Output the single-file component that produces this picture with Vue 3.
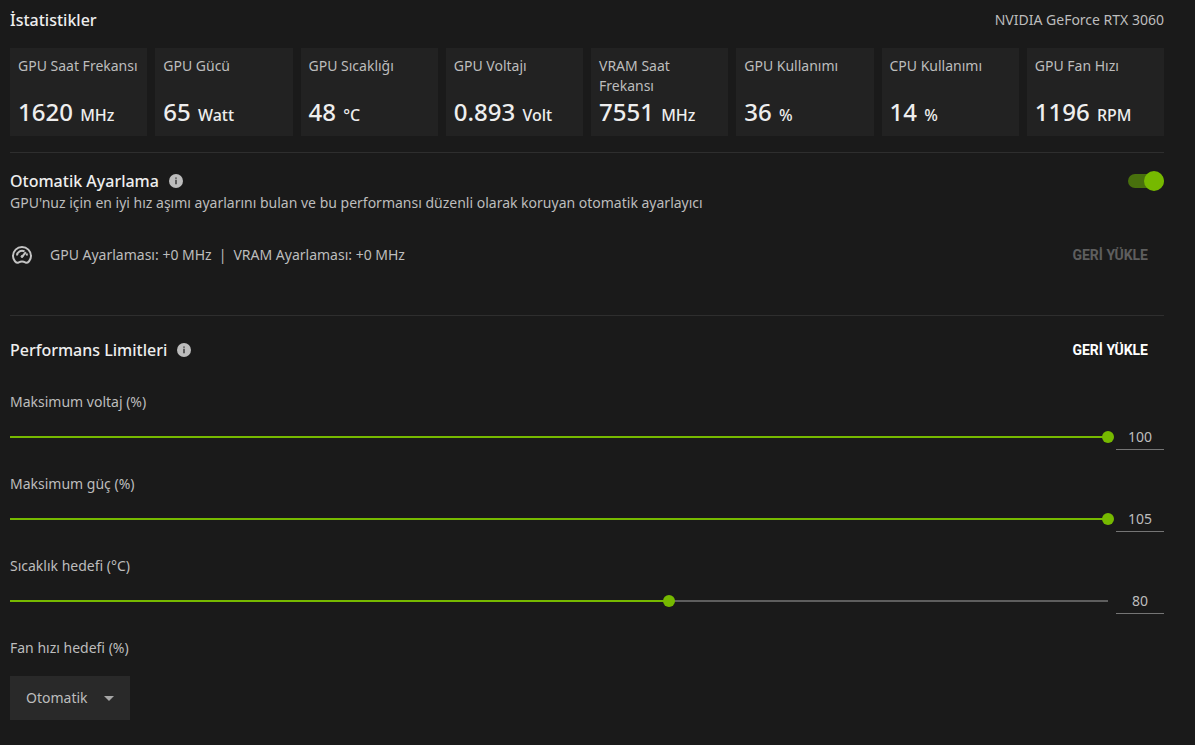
<template>
  <div class="panel">
    <header class="title-row">
      <h2>İstatistikler</h2>
      <span>NVIDIA GeForce RTX 3060</span>
    </header>

    <div class="stats">
      <div v-for="stat in stats" :key="stat.label" class="stat">
        <div class="stat-label">{{ stat.label }}</div>
        <div class="stat-value">{{ stat.value }} <small>{{ stat.unit }}</small></div>
      </div>
    </div>

    <section class="tuning">
      <div class="title-row tuning-title">
        <h2>
          <label for="auto-tuning">Otomatik Ayarlama</label>
          <svg class="info" viewBox="0 0 14 14">
            <circle cx="7" cy="7" r="7" fill="#bdbdbd" />
            <path d="M6.4 3.6h1.2v1.2H6.4zM6.4 5.8h1.2v4.4H6.4z" fill="#1a1a1a" />
          </svg>
        </h2>
        <input id="auto-tuning" v-model="autoTuning" class="toggle" type="checkbox">
      </div>
      <p>GPU'nuz için en iyi hız aşımı ayarlarını bulan ve bu performansı düzenli olarak koruyan otomatik ayarlayıcı</p>
      <div class="tuning-result">
        <svg class="gauge" viewBox="0 0 24 24" fill="none" stroke="#c4c4c4" stroke-width="2">
          <path d="M8 19.8C6.5 20.2 3 17.5 3 13a9 9 0 0 1 18 0c0 4.500-3.500 7.200-5 6.800-1.300-.6-2.500-1.200-4-1.200s-2.700.6-4 1.200z" />
          <path d="M7 12.500A5 5 0 0 1 14.500 8.400M17 12.500a5 5 0 0 0-.6-2" />
          <path d="M12 13.800L15.800 9.200" />
          <circle cx="12" cy="13.500" r="1" fill="#c4c4c4" stroke-width="1" />
        </svg>
        <span>GPU Ayarlaması: +0 MHz</span>
        <span class="separator">|</span>
        <span>VRAM Ayarlaması: +0 MHz</span>
        <button class="restore" disabled>GERİ YÜKLE</button>
      </div>
    </section>

    <section class="limits">
      <div class="title-row limits-title">
        <h2>
          Performans Limitleri
          <svg class="info" viewBox="0 0 14 14">
            <circle cx="7" cy="7" r="7" fill="#bdbdbd" />
            <path d="M6.4 3.6h1.2v1.2H6.4zM6.4 5.8h1.2v4.4H6.4z" fill="#1a1a1a" />
          </svg>
        </h2>
        <button class="restore" @click="resetLimits">GERİ YÜKLE</button>
      </div>

      <div v-for="limit in limits" :key="limit.id" class="limit">
        <label :for="limit.id">{{ limit.label }}</label>
        <div class="limit-row">
          <div class="slider">
            <input
              :id="limit.id"
              v-model.number="limit.value"
              type="range"
              :min="limit.min"
              :max="limit.max"
              :style="{ '--fill': fillOf(limit) }"
            >
          </div>
          <input v-model.number="limit.value" class="limit-value" type="text" :aria-label="limit.label">
        </div>
      </div>

      <div class="fan">
        <label for="fan">Fan hızı hedefi (%)</label>
        <div class="select">
          <select id="fan" v-model="fanMode">
            <option value="auto">Otomatik</option>
            <option value="manual">Manuel</option>
          </select>
          <svg class="arrow" viewBox="0 0 10 5"><path d="M0 0h10L5 5z" fill="#a6a6a6" /></svg>
        </div>
      </div>
    </section>
  </div>
</template>

<script setup>
import { ref } from 'vue';

const stats = [
  { label: 'GPU Saat Frekansı', value: '1620', unit: 'MHz' },
  { label: 'GPU Gücü', value: '65', unit: 'Watt' },
  { label: 'GPU Sıcaklığı', value: '48', unit: '°C' },
  { label: 'GPU Voltajı', value: '0.893', unit: 'Volt' },
  { label: 'VRAM Saat Frekansı', value: '7551', unit: 'MHz' },
  { label: 'GPU Kullanımı', value: '36', unit: '%' },
  { label: 'CPU Kullanımı', value: '14', unit: '%' },
  { label: 'GPU Fan Hızı', value: '1196', unit: 'RPM' },
];

const defaultLimits = () => [
  { id: 'voltage', label: 'Maksimum voltaj (%)', min: 0, max: 100, value: 100 },
  { id: 'power', label: 'Maksimum güç (%)', min: 50, max: 105, value: 105 },
  { id: 'temperature', label: 'Sıcaklık hedefi (°C)', min: 65, max: 90, value: 80 },
];

const autoTuning = ref(true);
const limits = ref(defaultLimits());
const fanMode = ref('auto');

const fillOf = (limit) => (limit.value - limit.min) / (limit.max - limit.min);

const resetLimits = () => {
  limits.value = defaultLimits();
};
</script>

<style>
body {
  background: #1a1a1a;
}
</style>

<style scoped>
.panel {
  padding: 10px 31px 24px 10px;
  font-family: "Noto Sans", sans-serif;
  font-size: 14px;
  line-height: 20px;
  color: #bdbdbd;
}

.panel * {
  box-sizing: border-box;
}

h2 {
  display: flex;
  align-items: center;
  gap: 10px;
  margin: 0;
  font-size: 16px;
  font-weight: 500;
  color: #eee;
}

p {
  margin: 0;
}

input,
select,
button {
  margin: 0;
  padding: 0;
  border: none;
  background: none;
  color: inherit;
  font: inherit;
  appearance: none;
}

.title-row {
  display: flex;
  align-items: center;
  justify-content: space-between;
}

.stats {
  display: grid;
  grid-template-columns: repeat(8, 1fr);
  gap: 8px;
  margin: 18px 0 16px;
}

.stat {
  display: flex;
  flex-direction: column;
  justify-content: space-between;
  min-width: 0;
  min-height: 88px;
  padding: 8px;
  background: #222;
}

.stat-value {
  font-size: 24px;
  line-height: 32px;
  font-weight: 500;
  color: #eee;
  white-space: nowrap;
}

.stat-value small {
  margin-left: 1px;
  font-size: 16px;
  line-height: 16px;
}

.info {
  width: 14px;
  height: 14px;
}

.tuning {
  padding: 16px 0 42px;
  border-top: 1px solid #2e2e2e;
}

.tuning-title {
  height: 24px;
}

.toggle {
  position: relative;
  width: 36px;
  height: 14px;
  border-radius: 7px;
  background: #555;
  cursor: pointer;
}

.toggle::before {
  content: "";
  position: absolute;
  top: -3px;
  left: 0;
  width: 20px;
  height: 20px;
  border-radius: 50%;
  background: #aaa;
}

.toggle:checked {
  background: #48700d;
}

.toggle:checked::before {
  left: 16px;
  background: #76b900;
}

.tuning-result {
  display: flex;
  align-items: center;
  height: 36px;
  margin-top: 24px;
}

.gauge {
  width: 24px;
  height: 24px;
  margin-right: 16px;
}

.separator {
  margin: 0 7px;
}

.restore {
  height: 36px;
  margin-left: auto;
  padding: 0 16px;
  font-family: Roboto, sans-serif;
  font-weight: 700;
  color: #fff;
  cursor: pointer;
}

.restore:disabled {
  color: #5e5e5e;
  cursor: default;
}

.limits {
  padding-top: 16px;
  border-top: 1px solid #2e2e2e;
}

.limits-title {
  margin-bottom: 24px;
}

.limit {
  margin-bottom: 24px;
}

.limit label,
.fan label {
  display: block;
}

.limit-row {
  display: flex;
  align-items: center;
  gap: 8px;
  height: 26px;
  margin-top: 12px;
}

.slider {
  flex: 1;
  display: flex;
}

/* the thumb hangs over both ends of the track by half its width */
.slider input {
  flex: 1;
  height: 12px;
  margin: 0 -6px;
  background:
    linear-gradient(#76b900, #76b900) 6px center / calc((100% - 12px) * var(--fill)) 2px no-repeat,
    linear-gradient(#5e5e5e, #5e5e5e) center / calc(100% - 12px) 2px no-repeat;
  cursor: pointer;
}

.slider input::-webkit-slider-thumb {
  appearance: none;
  width: 12px;
  height: 12px;
  border-radius: 50%;
  background: #76b900;
}

.limit-value {
  width: 48px;
  height: 26px;
  border-bottom: 1px solid #757575;
  text-align: center;
}

.select {
  position: relative;
  width: 120px;
  margin-top: 18px;
}

.select select {
  display: block;
  width: 100%;
  height: 44px;
  padding: 0 16px;
  background: #292929;
  cursor: pointer;
}

.arrow {
  position: absolute;
  top: 20px;
  right: 16px;
  width: 10px;
  height: 5px;
  pointer-events: none;
}
</style>
